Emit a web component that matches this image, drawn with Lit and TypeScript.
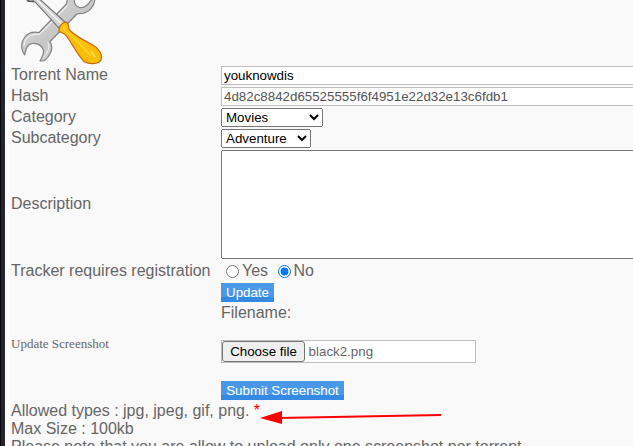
import { LitElement, html, css } from "lit";
import { customElement } from "lit/decorators.js";

@customElement("tools-icon")
class ToolsIcon extends LitElement {
  static styles = css`
    :host { display: block; width: 96px; height: 65px; }
    svg { display: block; width: 96px; height: 65px; overflow: hidden; }
  `;
  render() {
    return html`<svg viewBox="11 0 96 65">
      <defs>
        <linearGradient id="steel" x1="0" y1="0" x2="1" y2="1">
          <stop offset="0" stop-color="#e2e2e2" /><stop offset=".5" stop-color="#c6c6c6" /><stop offset="1" stop-color="#dedede" />
        </linearGradient>
        <linearGradient id="grip" x1="0" y1="1" x2="1" y2="0">
          <stop offset="0" stop-color="#f0a800" /><stop offset=".5" stop-color="#fdc20a" /><stop offset="1" stop-color="#eda400" />
        </linearGradient>
      </defs>
      <path fill="url(#steel)" stroke="#828282" stroke-width="1.2" stroke-linejoin="round"
        d="M24.500 55C21 50 20.500 43 24.500 37.500C28 32.500 34 31.500 39 32.500L66 4.500C67 3 67 1 67.500 -2L74 -2C74 2 75.500 6.500 79.500 7.500C84 8.500 89 4 92.500 -2L95 -2C95 6 89 12.500 82 13.500C79.500 13.800 78 13.500 77 14L50 41.500C53 46 51.500 52 48 57C46 60 43 61.500 40 60.800C42 57.500 44 54 43.500 50.500C42.500 46 38 43 32.500 43.500C27.500 44 26 48 24.500 55Z" />
      <path d="M24 46C24.500 36 33 33.500 39.500 34.500L67.500 5.500" fill="none" stroke="#f1f1f1" stroke-width="1.100" />
      <path d="M44 57C49 51 50 46 47.500 42" fill="none" stroke="#f1f1f1" stroke-width="1" />
      <path fill="#d3d3d3" stroke="#747474" stroke-width="1.1" d="M25.500 -1Q29 2.500 35 1.800L58.500 27.500L65.500 22.500L38.500 -2Z" />
      <path d="M27 .500Q30 2 34 1" fill="none" stroke="#555" stroke-width="1.400" />
      <path d="M37 0L62 24" stroke="#f2f2f2" stroke-width="1.500" />
      <path fill="url(#grip)" stroke="#c7670c" stroke-width="1.200" stroke-linejoin="round"
        d="M59 31.500C58.500 27 61.500 22.500 66 22C69 23.500 68.500 26.500 69 29.500C75 36 84 40.500 92 44.500C99 48 103 55 101 60C98.500 64.500 89 64.500 84 61.500C77.500 55 73.500 46 68.500 39C66 34.500 62 32.500 59 31.500Z" />
      <path d="M64 27C63 30 66 32 69 34C77 41 84 48 91 56" fill="none" stroke="#ffd52c" stroke-width="1.300" />
      <path d="M91 51L95 57" stroke="#ffe56d" stroke-width="1.200" />
    </svg>`;
  }
}

@customElement("app-root")
class AppRoot extends LitElement {
  static styles = css`
    * { box-sizing: border-box; }
    :host { display: flex; width: 633px; height: 446px; overflow: hidden; background: #f9f9f9; color: #666;
      font: 16px/18px "Liberation Sans", Arial, sans-serif; }
    .edge { flex: none; width: 10px; background: #fff; border-left: 1px solid #08090d; }
    .edge::before { content: ""; display: block; width: 4px; height: 100%; background: #242530; }
    main { flex: none; width: 640px; padding-left: 1px; }
    .form { display: grid; grid-template-columns: 210px 427px; align-items: center;
      grid-template-rows: 21px 21px 21px 21px 111px 22px 21px 20px 57px 21px; }
    .form > .value { grid-column: 2; }
    .label { padding-bottom: 2px; }
    input, select, textarea, button { font: 13.333px "Liberation Sans", Arial, sans-serif; margin: 0; }
    .text { display: block; width: 427px; height: 19px; border: 1px solid #bdbdbd; padding: 1px 2px; background: #fff; color: #000; outline: 0; }
    .hash { color: #545454; }
    select { display: block; height: 19px; }
    .category { width: 102px; }
    .subcategory { width: 90px; }
    textarea { display: block; width: 423px; height: 109px; }
    .radios { display: flex; align-items: center; }
    .radios label { display: flex; align-items: center; gap: 3px; }
    .radios label + label { margin-left: 9.4px; }
    .radios input { width: 13px; height: 13px; }
    .radios label:first-child { margin-left: 5px; }
    .action { display: block; height: 19px; padding: 0 5px; border: 0; color: #fff; white-space: nowrap;
      background: linear-gradient(#4a98e8 0 72%, #348ae2 76%); }
    .update { width: 53px; }
    .submit { width: 123px; }
    .small { font: 13px/16px "Liberation Serif", "Times New Roman", serif; align-self: start; padding-top: 13px; }
    .file { display: flex; align-items: center; gap: 3.6px; width: 255px; height: 23px; border: 1px solid #bdbdbd; background: #fff; font-size: 13.333px; }
    .choose { height: 21px; width: 83px; padding: 0; border: 1px solid #767676; border-radius: 3px; background: #efefef; color: #000; }
    .notes { margin-top: 1px; white-space: nowrap; }
    .required { color: red; }
    .arrow { position: absolute; left: 259px; top: 408px; width: 184px; height: 18px; }
  `;
  render() {
    return html`
      <div class="edge"></div>
      <main>
        <tools-icon></tools-icon>
        <div class="form">
          <div class="label">Torrent Name</div><input class="text" value="youknowdis" />
          <div class="label">Hash</div><input class="text hash" value="4d82c8842d65525555f6f4951e22d32e13c6fdb1" disabled />
          <div class="label">Category</div><select class="category"><option>Movies</option></select>
          <div class="label">Subcategory</div><select class="subcategory"><option>Adventure</option></select>
          <div class="label">Description</div><textarea></textarea>
          <div>Tracker requires registration</div>
          <div class="radios">
            <label><input type="radio" name="registration" />Yes</label>
            <label><input type="radio" name="registration" checked />No</label>
          </div>
          <div class="value"><button class="action update">Update</button></div>
          <div class="value">Filename:</div>
          <div class="small">Update Screenshot</div>
          <div class="file"><button class="choose">Choose file</button><span>black2.png</span></div>
          <div class="value"><button class="action submit">Submit Screenshot</button></div>
        </div>
        <div class="notes">
          <div>Allowed types : jpg, jpeg, gif, png. <span class="required">*</span></div>
          <div>Max Size : 100kb</div>
          <div>Please note that you are allow to upload only one screenshot per torrent</div>
        </div>
      </main>
      <svg class="arrow" viewBox="259 408 184 18">
        <path d="M441 415L279 418" stroke="red" stroke-width="1.8" />
        <path d="M260 418L282 411V424Z" fill="red" />
      </svg>`;
  }
}
